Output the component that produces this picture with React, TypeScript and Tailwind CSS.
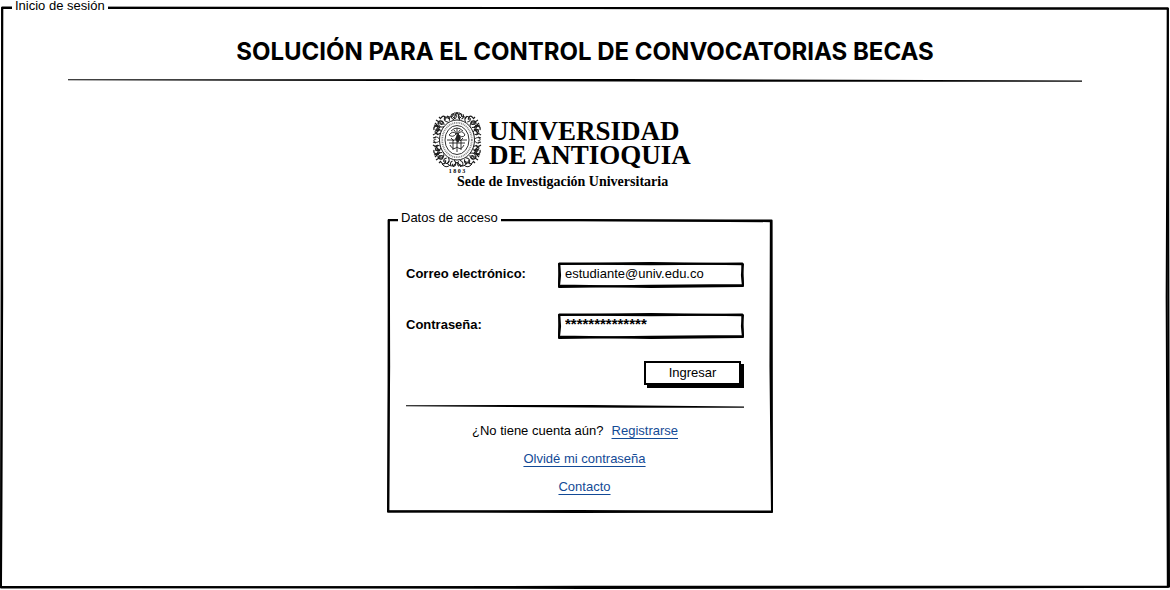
import type { ReactNode } from 'react';

/* Hand-drawn outline: two slightly different strokes laid over each other. */
function SketchFrame({ strokes, className }: { strokes: string[]; className: string }) {
  return (
    <svg
      aria-hidden="true"
      viewBox="0 0 1000 1000"
      preserveAspectRatio="none"
      className={`pointer-events-none absolute overflow-visible ${className}`}
      fill="none"
      stroke="#000"
      strokeWidth="2"
      strokeLinejoin="round"
    >
      {strokes.map((d) => (
        <path key={d} d={d} vectorEffect="non-scaling-stroke" />
      ))}
    </svg>
  );
}

function SketchRule({ className }: { className: string }) {
  return (
    <div role="separator" className={className}>
      <svg viewBox="0 0 1000 3" preserveAspectRatio="none" className="block h-[3px] w-full" aria-hidden="true">
        <path d="M0 0.2 L550 0 L1000 1.4 V2.8 H650 L0 1.2 Z" />
      </svg>
    </div>
  );
}

const CX = 24;
const CY = 27;

function ring(count: number, rx: number, ry: number, shift = 0) {
  return Array.from({ length: count }, (_, i) => {
    const a = ((i + shift) / count) * Math.PI * 2;
    return { key: i, x: CX + Math.cos(a) * rx, y: CY + Math.sin(a) * ry, deg: (a * 180) / Math.PI };
  });
}

function Seal() {
  return (
    <svg viewBox="0 0 48 60" className="h-[60px] w-12 shrink-0 overflow-visible" role="img" aria-label="Escudo" fill="none" stroke="#1c1c1c">
      <g strokeWidth="1">
        {ring(18, 18, 21.5).map((p) => (
          <path
            key={p.key}
            transform={`translate(${p.x} ${p.y}) rotate(${p.deg})`}
            d="M-1 0 C1 -3 4 -3 5 -1 C5.6 .8 3.4 1.6 3 .2 M0 1.4 C1.5 3.4 3.5 3.4 5 2"
          />
        ))}
        {[
          'translate(5 8)',
          'translate(43 8) scale(-1 1)',
          'translate(5 46) scale(1 -1)',
          'translate(43 46) scale(-1 -1)',
        ].map((t) => (
          <path
            key={t}
            transform={t}
            strokeWidth="1.2"
            d="M-4 9 C-5 5 -1 4 0 7 C1 9 -2 10 -2 8 M0 3 C0 -1 5 -1 5 2 C5 4 2 4 3 2 M-3 2 L2 7 M3 -3 C5 -6 8 -5 7 -1 M-2 12 L2 8 M-5 14 Q-1 11 0 14 M-2 -1 L1 1 M-4 4 L-1 5 M9 -5 L11 -2 M1 -4 L3 -2 M-5 17 L-2 16"
          />
        ))}
        <path d="M19 3 Q21 -2 24 1 Q27 -2 29 3 M21 5 L24 -1 L27 5 M16 4 Q20 2 22 6 M32 4 Q28 2 26 6" />
        <path d="M14 50 Q18 56 23 50 M34 50 Q30 56 25 50 M20 54 L24 49 L28 54 M9 51 Q13 56 17 52 M39 51 Q35 56 31 52" />
      </g>
      <ellipse cx={CX} cy={CY} rx="17.5" ry="20" fill="#fff" strokeWidth="1" />
      <ellipse cx={CX} cy={CY} rx="14.8" ry="17.2" stroke="#888" strokeWidth="1.8" strokeDasharray="1 .8" />
      <ellipse cx={CX} cy={CY} rx="12" ry="14.5" strokeWidth="0.9" />
      <g strokeWidth="0.9">
        <path d="M18 18 Q24 12 30 18 M16 22 Q20 17 23 21 Q20 25 16 22 M25 21 Q29 16 32 22 Q29 26 25 21" />
        <path d="M14 27 H34 M16 30 H32 M24 15 V39 M20 27 V37 M28 27 V37" />
        <path d="M17 32 Q20 38 24 34 Q28 38 31 32 M21 17 L24 21 L27 17 M18 25 L21 28 M30 25 L27 28" />
      </g>
      <path d="M25 20 L28 25 L25 30 L22 26 Z" fill="#222" stroke="none" />
      <text x="24" y="60" textAnchor="middle" fontSize="6" fontWeight="700" fontFamily="Liberation Serif, serif" fill="#000" stroke="none">
        1 8 0 3
      </text>
    </svg>
  );
}

const fieldFrame = [
  'M0 40 L500 0 L1000 50 L994 500 L1000 960 L500 1000 L0 940 L6 500 Z',
  'M2 20 L500 50 L996 20 L1000 920 L500 950 L0 1000 Z',
];

function Field({ id, label, children }: { id: string; label: string; children: ReactNode }) {
  return (
    <div className="flex h-[26px] items-center justify-between">
      <label htmlFor={id} className="pb-[2px] font-bold">
        {label}
      </label>
      <div className="relative h-full w-[186px]">
        <SketchFrame strokes={fieldFrame} className="left-px top-px h-6 w-[184px]" />
        {children}
      </div>
    </div>
  );
}

const inputClass = 'relative block h-full w-full bg-transparent px-[7px] outline-none';
const linkClass = 'text-[#134a96] underline decoration-1 underline-offset-[3px]';

export default function App() {
  return (
    <main className="relative min-h-screen bg-white font-['Liberation_Sans',Arial,sans-serif] text-[13px] text-black">
      <SketchFrame
        className="left-px top-2 h-[calc(100%-10px)] w-[calc(100%-2px)]"
        strokes={['M1 0 H500 L999 1 L998 500 L999 998 L500 1000 L0 998 L1 500 Z', 'M1 -1 L999 1 L1000 998 L500 998 L0 999 Z']}
      />
      <fieldset className="min-w-0">
        <legend className="relative ml-3 bg-white px-[3px] leading-3">Inicio de sesión</legend>

        <h1 className="pt-[26px] text-center font-['Inter',sans-serif] text-[24px] font-bold leading-7">
          SOLUCIÓN PARA EL CONTROL DE CONVOCATORIAS BECAS
        </h1>
        <SketchRule className="ml-[68px] mr-[88px] mt-[13px]" />

        <div className="flex justify-center pr-[10px] pt-[31px]">
          <div className="w-[386px]">
            <div className="ml-[46px] font-['Liberation_Serif',serif] font-bold">
              <div className="flex gap-2">
                <Seal />
                <p className="whitespace-nowrap pt-[6px] text-[27px] leading-6">
                  UNIVERSIDAD
                  <br />
                  DE ANTIOQUIA
                </p>
              </div>
              <p className="ml-6 text-[14px] leading-[18px]">Sede de Investigación Universitaria</p>
            </div>

            <form className="relative mt-5" onSubmit={(e) => e.preventDefault()}>
              <SketchFrame
                className="left-px top-[9px] h-[calc(100%-10px)] w-[calc(100%-2px)]"
                strokes={['M2 0 H500 L997 4 L996 500 L1000 1000 L500 997 L0 999 L3 500 Z', 'M2 0 L999 2 L1000 998 L500 1000 L1 997 Z']}
              />
              <fieldset className="min-w-0">
                <legend className="relative ml-[11px] bg-white px-[3px] leading-[14px]">Datos de acceso</legend>
                <div className="flex flex-col pb-3 pl-[19px] pr-[29px] pt-[37px]">
                  <div className="flex flex-col gap-[25px]">
                    <Field id="correo" label="Correo electrónico:">
                      <input id="correo" type="email" defaultValue="estudiante@univ.edu.co" className={`${inputClass} pb-1`} />
                    </Field>
                    <Field id="clave" label="Contraseña:">
                      <input
                        id="clave"
                        type="text"
                        autoComplete="off"
                        defaultValue="**************"
                        className={`${inputClass} pb-[6px] text-[15px] font-bold`}
                      />
                    </Field>
                  </div>
                  <button
                    type="submit"
                    className="mr-[3px] mt-[22px] h-6 w-[97px] self-end border-2 border-black bg-white pb-px shadow-[3px_3px_0_#000]"
                  >
                    Ingresar
                  </button>
                  <SketchRule className="mt-5" />
                  <div className="mt-[9px] text-center leading-7">
                    <p className="flex justify-center gap-2">
                      <span>¿No tiene cuenta aún?</span>
                      <a href="#registro" className={linkClass}>
                        Registrarse
                      </a>
                    </p>
                    <p className="pl-[19px]">
                      <a href="#recuperar" className={linkClass}>
                        Olvidé mi contraseña
                      </a>
                    </p>
                    <p className="pl-[19px]">
                      <a href="#contacto" className={linkClass}>
                        Contacto
                      </a>
                    </p>
                  </div>
                </div>
              </fieldset>
            </form>
          </div>
        </div>
      </fieldset>
    </main>
  );
}
